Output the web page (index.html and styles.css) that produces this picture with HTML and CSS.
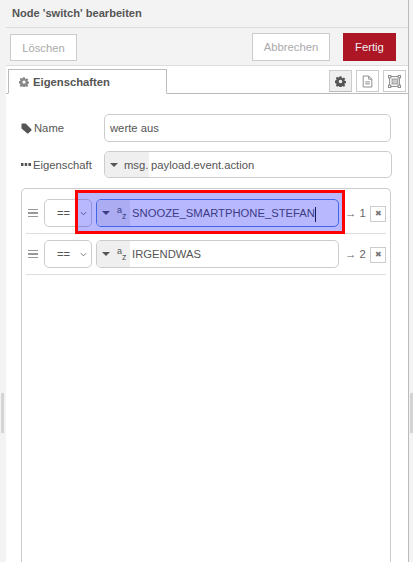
FILE: index.html
```html
<!DOCTYPE html>
<html lang="de">
<head>
    <meta charset="UTF-8">
    <title>Node 'switch' bearbeiten</title>
    <link rel="stylesheet" href="styles.css">
</head>
<body>
    <div class="grip grip-left"></div>
    <div class="tray">
        <div class="tray-title">Node 'switch' bearbeiten</div>

        <div class="toolbar">
            <button class="btn btn-delete">Löschen</button>
            <div class="toolbar-right">
                <button class="btn btn-cancel">Abbrechen</button>
                <button class="btn btn-done">Fertig</button>
            </div>
        </div>

        <div class="tabs">
            <div class="tab">
                <svg class="icon-cog" viewBox="0 0 16 16"><use href="#cog"></use></svg>
                Eigenschaften
            </div>
            <div class="tab-icons">
                <div class="tab-icon active"><svg class="icon-cog dark" viewBox="0 0 16 16"><use href="#cog"></use></svg></div>
                <div class="tab-icon">
                    <svg viewBox="0 0 14 16" width="11" height="13" fill="none" stroke="#888" stroke-width="1.2">
                        <path d="M1.5 1h7l4 4v10h-11z"/>
                        <path d="M8.5 1v4h4M4 8.5h6M4 11h6"/>
                    </svg>
                </div>
                <div class="tab-icon">
                    <svg viewBox="0 0 16 16" width="13" height="13" fill="none" stroke="#888" stroke-width="1.2">
                        <rect x="2" y="2" width="12" height="12"/>
                        <rect x="5" y="5" width="7" height="6" fill="#ccc" stroke="#999"/>
                        <rect x="0.5" y="0.5" width="3" height="3" fill="#fff"/>
                        <rect x="12.5" y="0.5" width="3" height="3" fill="#fff"/>
                        <rect x="0.5" y="12.5" width="3" height="3" fill="#fff"/>
                        <rect x="12.5" y="12.5" width="3" height="3" fill="#fff"/>
                    </svg>
                </div>
            </div>
        </div>

        <div class="form">
            <div class="form-row">
                <label class="form-label">
                    <svg viewBox="0 0 12 12" width="11" height="11"><path fill="#555" d="M0.5 1.5a1 1 0 0 1 1-1h3.6l6.2 6.2a1 1 0 0 1 0 1.4l-3.2 3.2a1 1 0 0 1-1.4 0L0.5 6z"/></svg>
                    Name
                </label>
                <div class="text-input">werte aus</div>
            </div>
            <div class="form-row row-prop">
                <label class="form-label">
                    <svg viewBox="0 0 10 4" width="10" height="4"><path fill="#555" d="M0 0h2.5v3H0zM3.7 0h2.5v3H3.7zM7.4 0H10v3H7.4z"/></svg>
                    Eigenschaft
                </label>
                <div class="typed-input">
                    <div class="type-select type-msg"><span class="caret"></span>msg.</div>
                    <div class="typed-value">payload.event.action</div>
                </div>
            </div>

            <div class="rule-list">
                <div class="rule">
                    <div class="handle"><i></i><i></i><i></i></div>
                    <div class="op-select">==<svg class="chevron" viewBox="0 0 8 5"><path d="M1 1l3 3 3-3"/></svg></div>
                    <div class="typed-input focused">
                        <div class="type-select"><span class="caret"></span><span class="az"><span>a</span><span>z</span></span></div>
                        <div class="typed-value">SNOOZE_SMARTPHONE_STEFAN<span class="cursor"></span></div>
                    </div>
                    <div class="output">→ 1</div>
                    <div class="remove">✖</div>
                </div>
                <div class="rule">
                    <div class="handle"><i></i><i></i><i></i></div>
                    <div class="op-select">==<svg class="chevron" viewBox="0 0 8 5"><path d="M1 1l3 3 3-3"/></svg></div>
                    <div class="typed-input">
                        <div class="type-select"><span class="caret"></span><span class="az"><span>a</span><span>z</span></span></div>
                        <div class="typed-value">IRGENDWAS</div>
                    </div>
                    <div class="output">→ 2</div>
                    <div class="remove">✖</div>
                </div>
            </div>
        </div>
        <div class="highlight"></div>
    </div>
    <div class="grip grip-right"></div>

    <svg width="0" height="0" class="defs">
        <symbol id="cog" viewBox="0 0 16 16">
            <path d="M6.6 0.5h2.8l.4 2.1 1.3.6 1.8-1.2 2 2-1.2 1.8.6 1.3 2.1.4v2.8l-2.1.4-.6 1.3 1.2 1.8-2 2-1.8-1.2-1.3.6-.4 2.1H6.6l-.4-2.1-1.3-.6-1.8 1.2-2-2 1.2-1.8-.6-1.3-2.1-.4V6.6l2.1-.4.6-1.3-1.2-1.8 2-2 1.8 1.2 1.3-.6zM8 5.4a2.6 2.6 0 1 0 0 5.2 2.6 2.6 0 0 0 0-5.2z" fill-rule="evenodd"/>
        </symbol>
    </svg>
</body>
</html>
```

FILE: styles.css
```css
html, body {
    margin: 0;
    height: 562px;
    overflow: hidden;
}
body {
    display: flex;
    background: #f3f3f3;
    font-family: "Liberation Sans", Arial, sans-serif;
    font-size: 11.25px;
    color: #555;
}
.defs {
    position: absolute;
}
.grip {
    flex: none;
    position: relative;
}
.grip-left {
    width: 6px;
}
.grip-right {
    width: 5px;
}
.grip::after {
    content: "";
    position: absolute;
    top: 393px;
    left: 1px;
    width: 3px;
    height: 40px;
    background: #d4d4d4;
}
.tray {
    flex: 1;
    position: relative;
    background: white;
    border-right: 1px solid #bbb;
}
.tray-title {
    height: 27px;
    line-height: 27px;
    padding-left: 6px;
    background: #f3f3f3;
    border-bottom: 1px solid #ddd;
    font-size: 11.1px;
    font-weight: bold;
    color: #555;
}
.toolbar {
    height: 38px;
    display: flex;
    justify-content: space-between;
    align-items: flex-start;
    padding: 5px 12px 0 4px;
    box-sizing: border-box;
    background: #f3f3f3;
    border-bottom: 1px solid #ddd;
}
.toolbar-right {
    display: flex;
    gap: 13px;
}
.btn {
    height: 28px;
    padding: 0;
    font-family: inherit;
    font-size: 11.25px;
    background: white;
    border: 1px solid #ccc;
    color: #aaa;
    box-sizing: border-box;
}
.btn-delete {
    width: 67px;
    height: 27px;
    margin-top: 1px;
}
.btn-cancel {
    width: 78px;
}
.btn-done {
    width: 53px;
    background: #ad1625;
    border-color: #ad1625;
    color: #eee;
}
.tabs {
    height: 25px;
    margin-top: 3px;
    padding: 0 2px;
    display: flex;
    justify-content: space-between;
    border-bottom: 1px solid #bbb;
    box-sizing: border-box;
    position: relative;
}
.tab {
    width: 159px;
    height: 25px;
    padding-left: 10px;
    box-sizing: border-box;
    background: white;
    border: 1px solid #bbb;
    border-bottom: 1px solid white;
    display: flex;
    align-items: center;
    gap: 4px;
    font-weight: bold;
    color: #555;
}
.icon-cog {
    width: 10px;
    height: 10px;
    fill: #888;
}
.icon-cog.dark {
    width: 11px;
    height: 11px;
    fill: #555;
}
.tab-icons {
    display: flex;
    gap: 4px;
    margin-top: 1px;
}
.tab-icon {
    width: 23px;
    height: 22px;
    box-sizing: border-box;
    border: 1px solid #ccc;
    background: white;
    display: flex;
    align-items: center;
    justify-content: center;
}
.tab-icon.active {
    background: #efefef;
    border-bottom-color: #bbb;
}
.form {
    padding: 20px 17px 0 15px;
}
.form-row {
    display: flex;
    align-items: center;
    height: 28px;
}
.row-prop {
    height: 27px;
    margin-top: 9px;
}
.form-label {
    width: 83px;
    flex: none;
    display: flex;
    align-items: center;
    gap: 2px;
    color: #555;
}
.text-input {
    flex: 1;
    height: 28px;
    line-height: 26px;
    padding-left: 5px;
    box-sizing: border-box;
    border: 1px solid #ccc;
    border-radius: 5px;
    color: #555;
}
.typed-input {
    flex: 1;
    height: 28px;
    display: flex;
    box-sizing: border-box;
    border: 1px solid #ccc;
    border-radius: 5px;
    overflow: hidden;
}
.row-prop .typed-input {
    height: 27px;
    margin-right: -1px;
}
.type-select {
    width: 33px;
    flex: none;
    display: flex;
    align-items: center;
    padding-left: 5px;
    box-sizing: border-box;
    background: #efefef;
    color: #555;
}
.type-msg {
    width: 44px;
    gap: 6px;
}
.caret {
    width: 0;
    height: 0;
    margin-right: 7px;
    border-left: 4px solid transparent;
    border-right: 4px solid transparent;
    border-top: 4px solid #555;
}
.type-msg .caret {
    margin-right: 0;
}
.az {
    display: flex;
    font-size: 9px;
    line-height: 9px;
}
.az span:first-child {
    transform: translateY(-3.5px);
}
.az span:last-child {
    transform: translateY(2.5px);
}
.typed-value {
    flex: 1;
    padding-left: 2px;
    line-height: 26px;
    color: #555;
    white-space: nowrap;
}
.focused {
    border-color: #5a8de0;
}
.cursor {
    display: inline-block;
    width: 1px;
    height: 15px;
    background: #222;
    vertical-align: middle;
}
.rule-list {
    margin-top: 10px;
    height: 374px;
    padding: 10px 4px 0;
    box-sizing: border-box;
    border: 1px solid #ccc;
    border-bottom: none;
    border-radius: 5px 5px 0 0;
}
.rule {
    height: 34px;
    margin-bottom: 6px;
    display: flex;
    align-items: flex-start;
    border-bottom: 1px solid #ddd;
}
.handle {
    width: 18px;
    height: 28px;
    flex: none;
    display: flex;
    flex-direction: column;
    justify-content: center;
    gap: 2px;
    padding-left: 2px;
    box-sizing: border-box;
}
.handle i {
    display: block;
    width: 10px;
    height: 1.5px;
    background: #999;
}
.op-select {
    width: 48px;
    height: 28px;
    flex: none;
    margin-right: 4px;
    padding: 0 4px 0 12px;
    box-sizing: border-box;
    display: flex;
    align-items: center;
    justify-content: space-between;
    border: 1px solid #ccc;
    border-radius: 5px;
    color: #555;
}
.chevron {
    width: 7px;
    height: 5px;
    fill: none;
    stroke: #666;
    stroke-width: 1;
}
.rule .typed-input {
    flex: none;
    width: 243px;
}
.output {
    width: 25px;
    flex: none;
    height: 28px;
    line-height: 28px;
    margin-left: 6px;
    color: #666;
    white-space: nowrap;
}
.remove {
    width: 16px;
    height: 16px;
    flex: none;
    margin-top: 7px;
    box-sizing: border-box;
    border: 1px solid #ccc;
    text-align: center;
    font-size: 8px;
    line-height: 14px;
    color: #777;
}
.highlight {
    position: absolute;
    left: 69px;
    top: 190px;
    width: 270px;
    height: 44px;
    box-sizing: border-box;
    border: 3px solid #f00;
    background: rgba(0, 0, 255, 0.28);
}
```
